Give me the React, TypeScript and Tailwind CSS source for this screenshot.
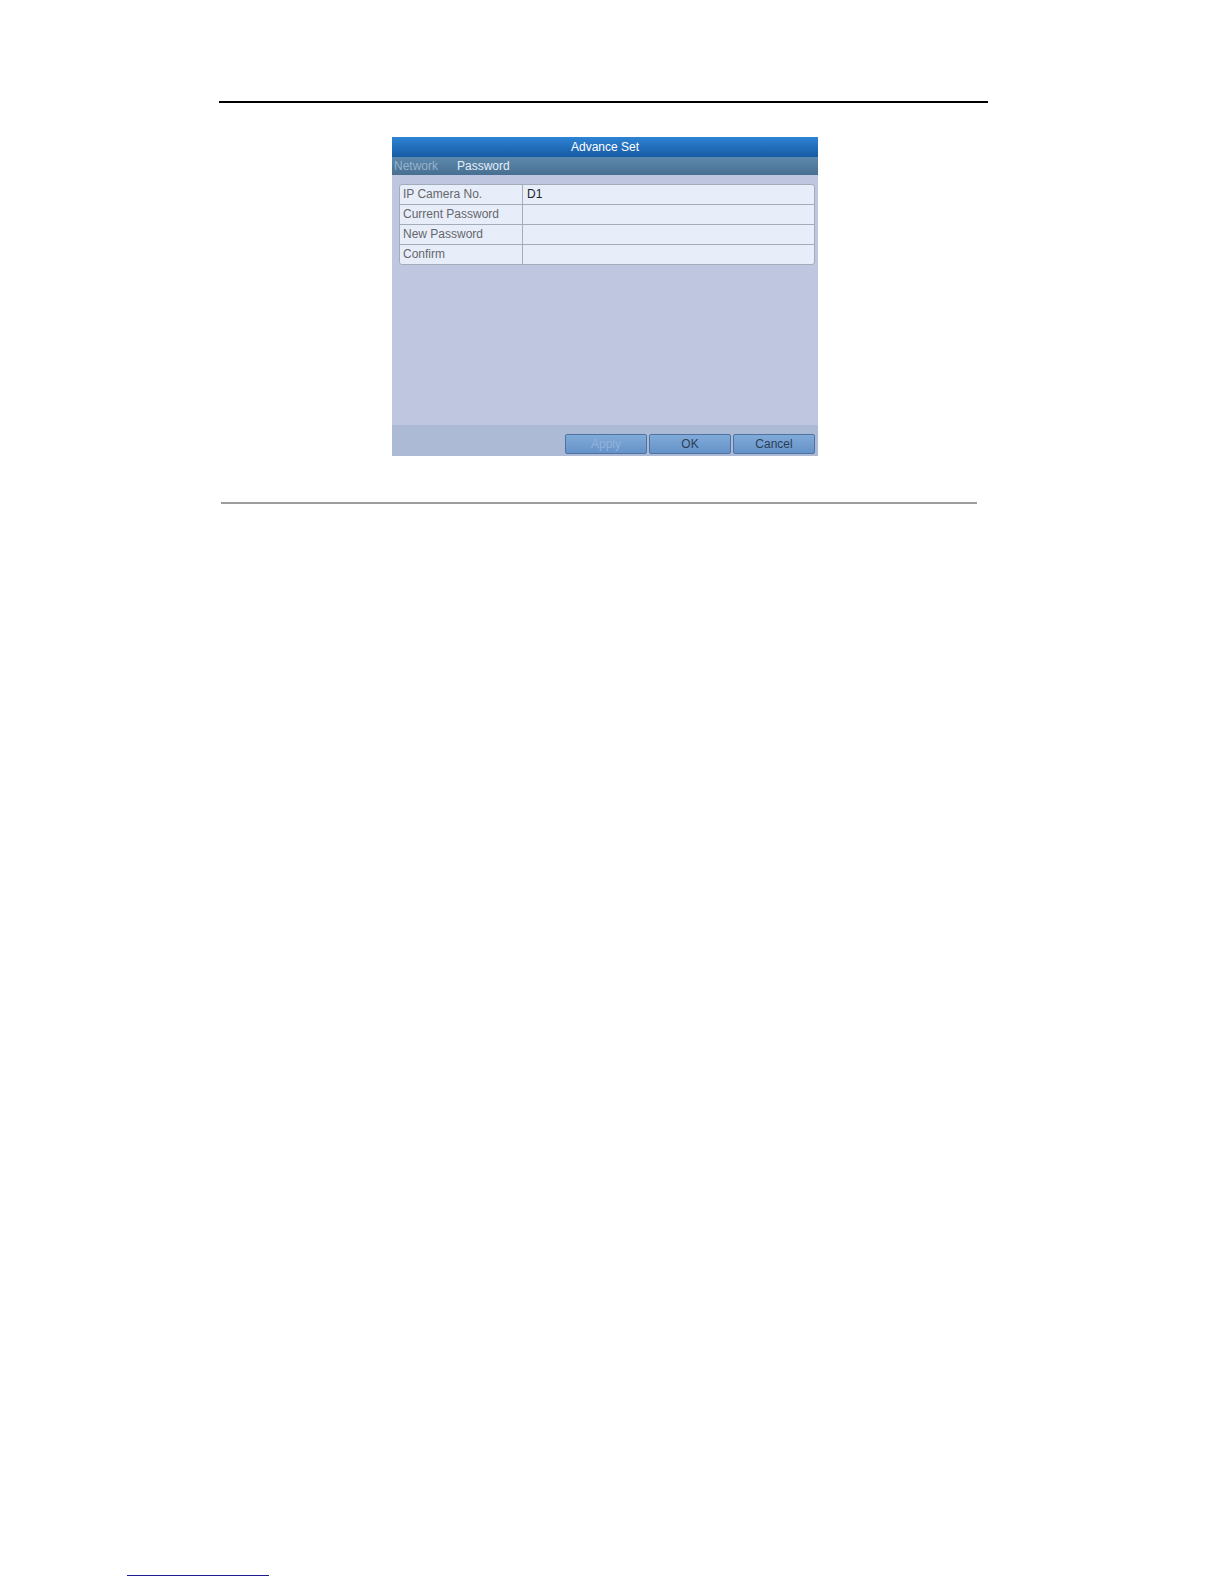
import React from 'react';

type Field = {
  label: string;
  value: string;
};

const fields: Field[] = [
  { label: 'IP Camera No.', value: 'D1' },
  { label: 'Current Password', value: '' },
  { label: 'New Password', value: '' },
  { label: 'Confirm', value: '' },
];

function DialogButton({ label, disabled }: { label: string; disabled?: boolean }) {
  return (
    <button
      className={
        disabled
          ? 'w-[82px] h-[20px] rounded-[2px] border border-[#4f73a0] bg-gradient-to-b from-[#80aad8] to-[#6592c8] text-[12px] leading-none text-[#93b3da]'
          : 'w-[82px] h-[20px] rounded-[2px] border border-[#4f73a0] bg-gradient-to-b from-[#80aad8] to-[#6592c8] text-[12px] leading-none text-[#2c3e57]'
      }
    >
      {label}
    </button>
  );
}

function AdvanceSetDialog() {
  return (
    <div className="ml-[392px] mt-[34px] w-[426px] h-[319px] flex flex-col bg-[#bec7df] font-['Liberation_Sans',Arial,sans-serif]">
      {/* title bar */}
      <div className="h-[20px] flex items-center justify-center bg-gradient-to-b from-[#2d84d4] to-[#185aa4] text-[12px] text-white">
        Advance Set
      </div>

      {/* tabs */}
      <div className="h-[18px] flex items-center gap-[19px] pl-[2px] bg-gradient-to-b from-[#5d89ad] to-[#476f92] text-[12px]">
        <span className="text-[#98b3cb]">Network</span>
        <span className="text-[#e6eff9]">Password</span>
      </div>

      {/* form */}
      <div className="flex-1 pt-[9px] pl-[7px] pr-[3px]">
        <div className="rounded-[3px] border border-[#a4acba] bg-[#e8eef9] overflow-hidden">
          {fields.map((field, i) => (
            <div
              key={field.label}
              className={
                i === 0
                  ? 'flex h-[19px] text-[12px] leading-[18px]'
                  : 'flex h-[20px] text-[12px] leading-[18px] border-t border-[#a4acba]'
              }
            >
              <div className="w-[123px] pl-[3px] border-r border-[#a4acba] text-[#66666a]">{field.label}</div>
              <div className="flex-1 pl-[4px] text-[#1f1f24]">{field.value}</div>
            </div>
          ))}
        </div>
      </div>

      {/* bottom bar */}
      <div className="h-[31px] flex items-start justify-end gap-[2px] pt-[9px] pr-[3px] bg-[#adbad6]">
        <DialogButton label="Apply" disabled />
        <DialogButton label="OK" />
        <DialogButton label="Cancel" />
      </div>
    </div>
  );
}

export default function App() {
  return (
    <div className="w-[1224px] h-[1584px] bg-white flex flex-col">
      <div className="ml-[219px] mt-[101px] w-[769px] h-[2px] bg-black" />

      <AdvanceSetDialog />

      <div className="ml-[221px] mt-[46px] w-[756px] h-[2px] bg-[#9c9c9c]" />

      <div className="ml-[127px] mt-[1071px] w-[142px] h-px bg-[#1d1d8f]" />
    </div>
  );
}
